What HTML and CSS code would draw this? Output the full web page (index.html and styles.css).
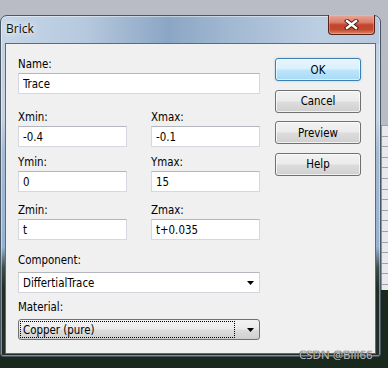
FILE: index.html
```html
<!DOCTYPE html>
<html lang="en">
<head>
    <meta charset="UTF-8">
    <title>Brick</title>
    <link rel="stylesheet" href="styles.css">
</head>
<body>
    <div class="desktop">
        <div class="window">
            <div class="titlebar">
                <span class="title">Brick</span>
                <button class="close" type="button">
                    <svg width="15" height="11" viewBox="0 0 15 11">
                        <path d="M3 2 L12 9 M12 2 L3 9" stroke="#3b1a14" stroke-width="4.2" stroke-linecap="square"/>
                        <path d="M3 2 L12 9 M12 2 L3 9" stroke="#ffffff" stroke-width="2.4" stroke-linecap="square"/>
                    </svg>
                </button>
            </div>

            <div class="client">
                <form class="fields">
                    <div class="field">
                        <label for="name">Name:</label>
                        <input class="text" id="name" type="text" value="Trace">
                    </div>

                    <div class="pair pair-x">
                        <div class="field">
                            <label for="xmin">Xmin:</label>
                            <input class="text" id="xmin" type="text" value="-0.4">
                        </div>
                        <div class="field">
                            <label for="xmax">Xmax:</label>
                            <input class="text" id="xmax" type="text" value="-0.1">
                        </div>
                    </div>

                    <div class="pair pair-y">
                        <div class="field">
                            <label for="ymin">Ymin:</label>
                            <input class="text" id="ymin" type="text" value="0">
                        </div>
                        <div class="field">
                            <label for="ymax">Ymax:</label>
                            <input class="text" id="ymax" type="text" value="15">
                        </div>
                    </div>

                    <div class="pair pair-z">
                        <div class="field">
                            <label for="zmin">Zmin:</label>
                            <input class="text" id="zmin" type="text" value="t">
                        </div>
                        <div class="field">
                            <label for="zmax">Zmax:</label>
                            <input class="text" id="zmax" type="text" value="t+0.035">
                        </div>
                    </div>

                    <div class="field field-component">
                        <label>Component:</label>
                        <div class="combo">
                            <span class="combo-value">DiffertialTrace</span>
                            <svg class="arrow" width="7" height="4" viewBox="0 0 7 4"><path d="M0 0 H7 L3.5 4 Z" fill="#000"/></svg>
                        </div>
                    </div>

                    <div class="field field-material">
                        <label>Material:</label>
                        <div class="combo combo-list">
                            <span class="combo-value focused">Copper (pure)</span>
                            <svg class="arrow" width="7" height="4" viewBox="0 0 7 4"><path d="M0 0 H7 L3.5 4 Z" fill="#000"/></svg>
                        </div>
                    </div>
                </form>

                <div class="buttons">
                    <button class="btn btn-default" type="button">OK</button>
                    <button class="btn" type="button">Cancel</button>
                    <button class="btn" type="button">Preview</button>
                    <button class="btn" type="button">Help</button>
                </div>
            </div>
        </div>
        <div class="sheet"></div>
        <div class="watermark">CSDN @Bill66</div>
    </div>
</body>
</html>
```

FILE: styles.css
```css
body {
    margin: 0;
}

.desktop {
    position: relative;
    width: 388px;
    height: 368px;
    overflow: hidden;
    box-sizing: border-box;
    padding-top: 15px;
    display: flex;
    align-items: flex-start;
    background: linear-gradient(to bottom, #b9bcc4 0, #b9bcc4 125px, #e7e9ed 125px, #e7e9ed 290px, #1a291d 290px);
    font-family: "DejaVu Sans Condensed", "DejaVu Sans", sans-serif;
    font-size: 11.4px;
    color: #000;
}

/* Window frame (Win7 glass look) */
.window {
    width: 381px;
    height: 342px;
    flex: none;
    box-sizing: border-box;
    border: 1px solid #4a5765;
    border-radius: 7px 7px 3px 3px;
    padding: 0 4px 2px 4px;
    display: flex;
    flex-direction: column;
    box-shadow: inset 0 0 0 1px rgba(255, 255, 255, 0.45);
    background:
        linear-gradient(to right, #c6d6e8 0%, #b6c9de 22%, #8ba6c4 44%, #a3bad3 62%, #bccee2 84%, #b6c9de 100%) top left / 100% 28px no-repeat,
        linear-gradient(to bottom, #c2d1e2 0%, #c6d3e2 30%, #a5bbd4 40%, #97b2d2 68%, #3b4e4a 74%, #1f2d25 80%, #222f29 100%);
}

.titlebar {
    height: 27px;
    display: flex;
    align-items: flex-start;
    justify-content: space-between;
}

.title {
    margin: 5px 0 0 1px;
    font-family: "Open Sans", "Noto Sans", sans-serif;
    font-size: 12px;
    line-height: 16px;
    color: #111;
    text-shadow: 0 0 6px #fff, 0 0 10px rgba(255, 255, 255, 0.8);
}

.close {
    width: 47px;
    height: 20px;
    margin: -1px 1px 0 0;
    padding: 0;
    border: 1px solid #5a2218;
    border-top: none;
    border-radius: 0 0 4px 4px;
    display: flex;
    align-items: center;
    justify-content: center;
    background: linear-gradient(to bottom, #e9aa9c 0%, #d97a66 40%, #c4432d 52%, #c24a2f 78%, #dc8a6b 100%);
    box-shadow: inset 0 0 0 1px rgba(255, 200, 190, 0.35);
}

.close svg {
    display: block;
    margin-top: -1px;
}

/* Client area */
.client {
    height: 311px;
    box-sizing: border-box;
    border: 1px solid #5e6b79;
    background: #f0f0f0;
    display: flex;
    padding: 14px 0 0 12px;
}

.fields {
    width: 242px;
    margin: 0;
    display: flex;
    flex-direction: column;
}

.field label {
    display: block;
    height: 13px;
    line-height: 13px;
}

.text {
    display: block;
    width: 100%;
    height: 21px;
    margin: 2px 0 0;
    box-sizing: border-box;
    padding: 0 4px;
    border: 1px solid #d5d9df;
    border-top-color: #b3b6bc;
    background: #fff;
    font: inherit;
    color: #000;
    outline: none;
}

.pair {
    display: grid;
    grid-template-columns: 109px 109px;
    column-gap: 24px;
}

.pair-x {
    margin-top: 17px;
}

.pair-y {
    margin-top: 9px;
}

.pair-z {
    margin-top: 12px;
}

.field-component {
    margin-top: 14px;
}

.field-material {
    margin-top: 8px;
}

.combo {
    height: 21px;
    margin-top: 5px;
    box-sizing: border-box;
    border: 1px solid #d2d6dc;
    border-top-color: #b3b6bc;
    background: #fff;
    display: flex;
    align-items: center;
    justify-content: space-between;
    padding: 0 4px 0 4px;
}

.combo-list {
    padding: 0 4px 0 1px;
    border: 1px solid #707070;
    border-radius: 3px;
    background: linear-gradient(to bottom, #f2f2f2 0%, #ebebeb 48%, #dddddd 52%, #cfcfcf 100%);
}

.combo-value.focused {
    width: 215px;
    height: 17px;
    line-height: 17px;
    box-sizing: border-box;
    padding-left: 2px;
    border: 1px dotted #000;
}

.arrow {
    display: block;
    margin-right: 1px;
}

/* Buttons */
.buttons {
    width: 86px;
    margin-left: 15px;
    display: flex;
    flex-direction: column;
    gap: 8.67px;
}

.btn {
    height: 23px;
    padding: 0;
    border: 1px solid #707070;
    border-radius: 3px;
    background: linear-gradient(to bottom, #f2f2f2 0%, #ebebeb 48%, #dddddd 52%, #cfcfcf 100%);
    box-shadow: inset 0 0 0 1px rgba(255, 255, 255, 0.7);
    font: inherit;
    color: #000;
}

.btn-default {
    border-color: #3c7fb1;
    background: linear-gradient(to bottom, #e8f5fc 0%, #d9f0fc 48%, #bee6fd 52%, #a7d9f5 100%);
    box-shadow: inset 0 0 0 1px rgba(255, 255, 255, 0.6), 0 0 2px rgba(60, 160, 220, 0.5);
}

/* Background sheet peeking out on the right */
.sheet {
    flex: 1;
    height: 165px;
    margin-top: 110px;
    border-left: 1px solid #8e939a;
    background: repeating-linear-gradient(to bottom, #9da1a8 0, #9da1a8 1px, transparent 1px, transparent 10.6px);
}

.watermark {
    position: absolute;
    left: 299px;
    top: 347px;
    font-family: "Noto Sans", sans-serif;
    font-size: 11.5px;
    color: rgba(235, 235, 235, 0.8);
    text-shadow: 0 0 1px #222, 0 0 1px #222;
}
```
